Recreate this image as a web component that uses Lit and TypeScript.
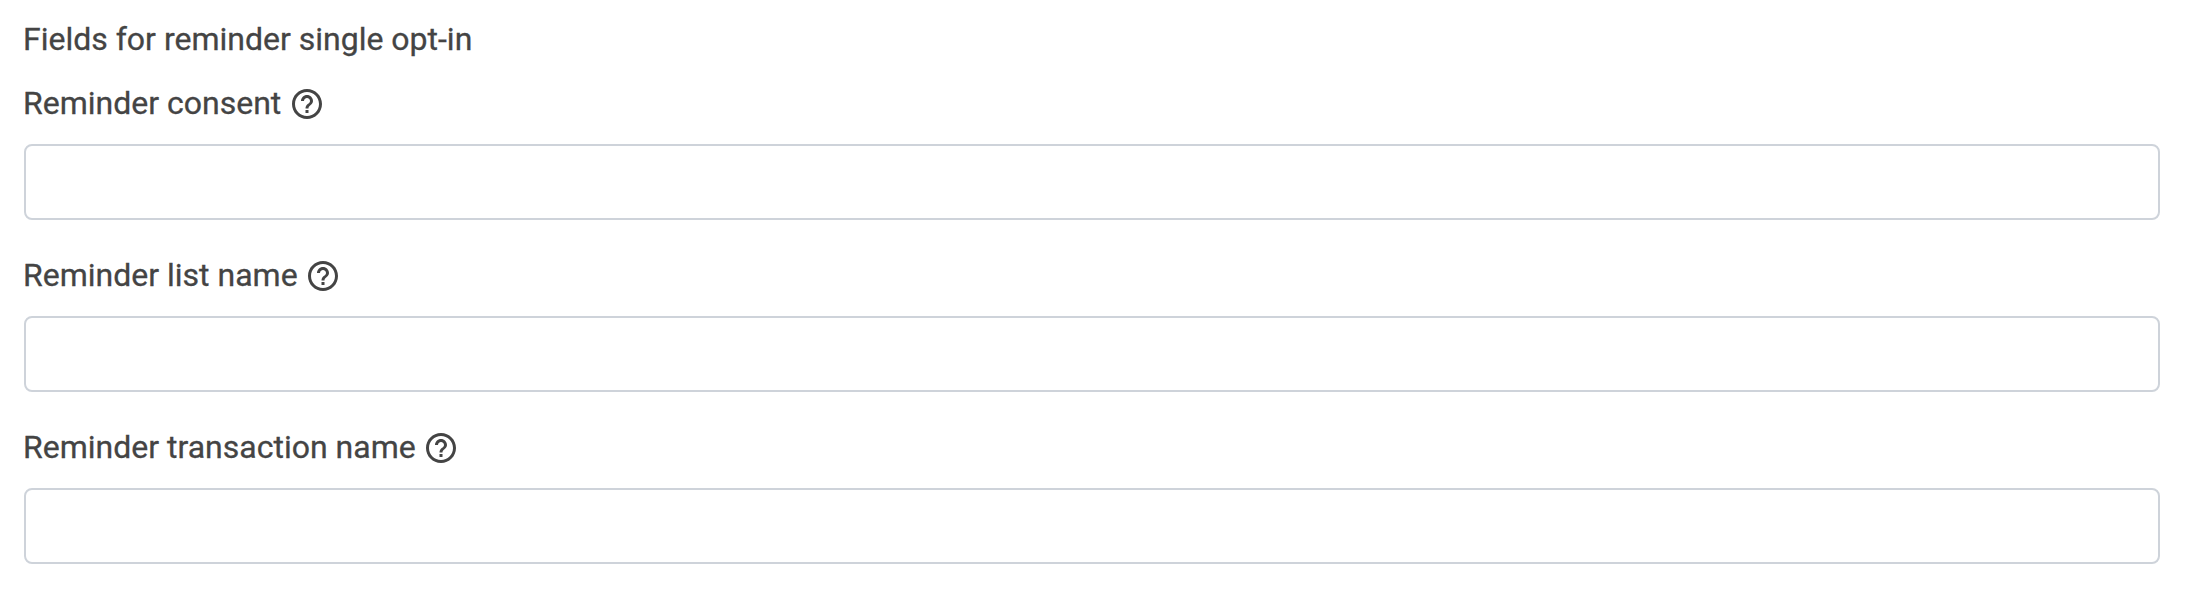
import { LitElement, html, css } from "lit";
import { customElement, property } from "lit/decorators.js";

@customElement("help-icon")
export class HelpIcon extends LitElement {
  static styles = css`
    :host { display: block; width: 36px; height: 36px; }
    .icon { display: block; width: 36px; height: 36px; fill: currentColor; }
  `;

  render() {
    return html`<svg class="icon" viewBox="0 0 24 24" aria-hidden="true">
      <path d="M11 18h2v-2h-2v2zm1-16C6.480 2 2 6.480 2 12s4.480 10 10 10 10-4.480 10-10S17.520 2 12 2zm0 18c-4.410 0-8-3.590-8-8s3.590-8 8-8 8 3.590 8 8-3.590 8-8 8zm0-14c-2.210 0-4 1.790-4 4h2c0-1.100.9-2 2-2s2 .9 2 2c0 2-3 1.750-3 5h2c0-2.250 3-2.500 3-5 0-2.210-1.790-4-4-4z" />
    </svg>`;
  }
}

@customElement("text-field")
export class TextField extends LitElement {
  @property() label = "";

  static styles = css`
    :host { display: block; }
    .label {
      display: flex;
      align-items: center;
      height: 42px;
      gap: 7.5px;
      margin-bottom: 19px;
    }
    .input {
      display: block;
      box-sizing: border-box;
      width: 100%;
      height: 76px;
      margin: 0;
      padding: 0 16px;
      border: 2px solid #ced3da;
      border-radius: 8px;
      background: #fff;
      color: inherit;
      font: inherit;
      outline: none;
    }
    .text { line-height: 40px; margin-bottom: 2px; margin-left: -1px; white-space: nowrap; }
  `;

  render() {
    return html`
      <div class="label">
        <span class="text">${this.label}</span>
        <help-icon></help-icon>
      </div>
      <input class="input" type="text" aria-label=${this.label} />
    `;
  }
}

@customElement("app-root")
export class AppRoot extends LitElement {
  static styles = css`
    :host {
      display: block;
      box-sizing: border-box;
      height: 594px;
      padding: 19px 30px 0 24px;
      background: #fff;
      color: #444;
      font: 400 32px "Roboto", sans-serif;
      -webkit-text-stroke: 0.3px #444;
    }
    .title {
      margin: 0 0 24px -1px;
      font: inherit;
      line-height: 40px;
    }
    .fields { display: grid; gap: 35px; }
  `;

  render() {
    return html`
      <h2 class="title">Fields for reminder single opt-in</h2>
      <div class="fields">
        ${["Reminder consent", "Reminder list name", "Reminder transaction name"].map(
          (label) => html`<text-field .label=${label}></text-field>`
        )}
      </div>
    `;
  }
}
